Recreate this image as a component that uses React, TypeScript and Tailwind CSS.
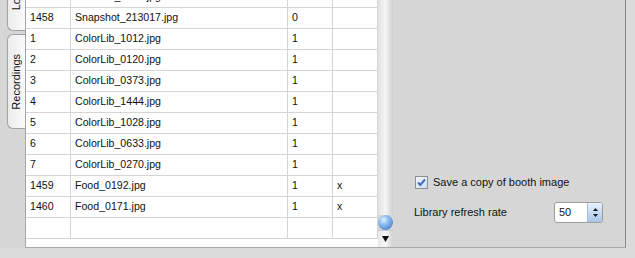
import React from "react";

const rows = [
  { id: "1457", name: "ColorLib_0438.jpg", n: "1", x: "" },
  { id: "1458", name: "Snapshot_213017.jpg", n: "0", x: "" },
  { id: "1", name: "ColorLib_1012.jpg", n: "1", x: "" },
  { id: "2", name: "ColorLib_0120.jpg", n: "1", x: "" },
  { id: "3", name: "ColorLib_0373.jpg", n: "1", x: "" },
  { id: "4", name: "ColorLib_1444.jpg", n: "1", x: "" },
  { id: "5", name: "ColorLib_1028.jpg", n: "1", x: "" },
  { id: "6", name: "ColorLib_0633.jpg", n: "1", x: "" },
  { id: "7", name: "ColorLib_0270.jpg", n: "1", x: "" },
  { id: "1459", name: "Food_0192.jpg", n: "1", x: "x" },
  { id: "1460", name: "Food_0171.jpg", n: "1", x: "x" },
  { id: "", name: "", n: "", x: "" },
];

function Checkbox() {
  return (
    <svg width="13" height="13" viewBox="0 0 13 13">
      <defs>
        <linearGradient id="cb" x1="0" y1="0" x2="1" y2="1">
          <stop offset="0" stopColor="#f4f8fd" />
          <stop offset="1" stopColor="#c9dcf2" />
        </linearGradient>
      </defs>
      <rect x="0.5" y="0.5" width="12" height="12" fill="url(#cb)" stroke="#8e8f8f" />
      <path d="M3 6.5 L5.3 9 L10 3.5" fill="none" stroke="#3e6fb8" strokeWidth="2" />
    </svg>
  );
}

export default function App() {
  return (
    <div
      className="w-[635px] h-[258px] bg-[#dbdbdb] overflow-hidden flex text-[11px] text-[#111]"
      style={{ fontFamily: '"Liberation Sans", Arial, sans-serif' }}
    >
      {/* tabs */}
      <div className="w-[25px] h-[248px] bg-[#d6d6d6] flex flex-col pl-[7px] shrink-0">
        <div className="h-[31px] flex flex-col justify-end items-center pb-[20px] bg-linear-to-r from-[#ececec] to-[#fafafa] border-l border-b border-[#a3a3a3] rounded-bl-[6px] overflow-visible">
          <span className="[writing-mode:vertical-rl] rotate-180 leading-none">Local</span>
        </div>
        <div className="mt-[3px] h-[95px] flex items-center justify-center bg-linear-to-r from-[#ececec] to-[#fafafa] border-l border-t border-b border-[#a3a3a3] rounded-l-[6px]">
          <span className="[writing-mode:vertical-rl] rotate-180 leading-none">Recordings</span>
        </div>
      </div>

      {/* group box */}
      <div className="w-[601px] h-[248px] bg-[#d6d6d6] border-l border-b border-r border-l-[#a5a5a5] border-b-[#a9a9a9] border-r-[#8a8a8a] flex shrink-0">
        {/* table */}
        <div className="w-[352px] h-full bg-white overflow-hidden text-[10.6px]">
          <div className="mt-[-13px]">
            {rows.map((r, i) => (
              <div key={i} className="flex h-[21px] border-b border-[#d5d5d5]">
                <div className="w-[45px] pl-1 flex items-center border-r border-[#d5d5d5]">{r.id}</div>
                <div className="w-[217px] pl-1 flex items-center border-r border-[#d5d5d5]">{r.name}</div>
                <div className="w-[45px] pl-1 flex items-center border-r border-[#d5d5d5]">{r.n}</div>
                <div className="w-[45px] pl-1 flex items-center border-r border-[#d5d5d5]">{r.x}</div>
              </div>
            ))}
          </div>
        </div>

        {/* scrollbar */}
        <div className="w-[15px] h-full flex flex-col shrink-0">
          <div className="flex-1 bg-linear-to-r from-[#e2e2e2] via-[#f5f5f5] to-[#cdcdcd]" />
          <div className="h-[15px] w-[15px] rounded-full bg-[radial-gradient(circle_at_38%_32%,#e4f0fd_0%,#8fbcf0_35%,#4f8ad6_75%,#3b6fb8_100%)]" />
          <div className="h-[17px] flex items-center justify-center bg-linear-to-r from-[#e8e8e8] via-[#f7f7f7] to-[#d2d2d2] border-t border-[#c8c8c8]">
            <svg width="7" height="6" viewBox="0 0 7 6">
              <path d="M0 0 L7 0 L3.5 6 Z" fill="#111" />
            </svg>
          </div>
        </div>

        {/* settings */}
        <div className="flex-1 flex flex-col pt-[176px] pl-[22px]">
          <div className="flex items-center gap-[5px] h-[13px]">
            <Checkbox />
            <span>Save a copy of booth image</span>
          </div>
          <div className="flex items-center mt-[13px] -ml-px">
            <span className="w-[140px]">Library refresh rate</span>
            <div className="w-[49px] h-[21px] flex bg-white border border-[#9c9c9c] rounded-[3px] overflow-hidden">
              <div className="flex-1 pl-[4px] flex items-center">50</div>
              <div className="w-[15px] flex flex-col items-center justify-center gap-[3px] bg-linear-to-b from-[#e9f2fc] to-[#a6c5ea] border-l border-[#a8bfdc]">
                <svg width="5" height="3" viewBox="0 0 5 3">
                  <path d="M0 3 L5 3 L2.5 0 Z" fill="#1a1a1a" />
                </svg>
                <svg width="5" height="3" viewBox="0 0 5 3">
                  <path d="M0 0 L5 0 L2.5 3 Z" fill="#1a1a1a" />
                </svg>
              </div>
            </div>
          </div>
        </div>
      </div>
    </div>
  );
}
